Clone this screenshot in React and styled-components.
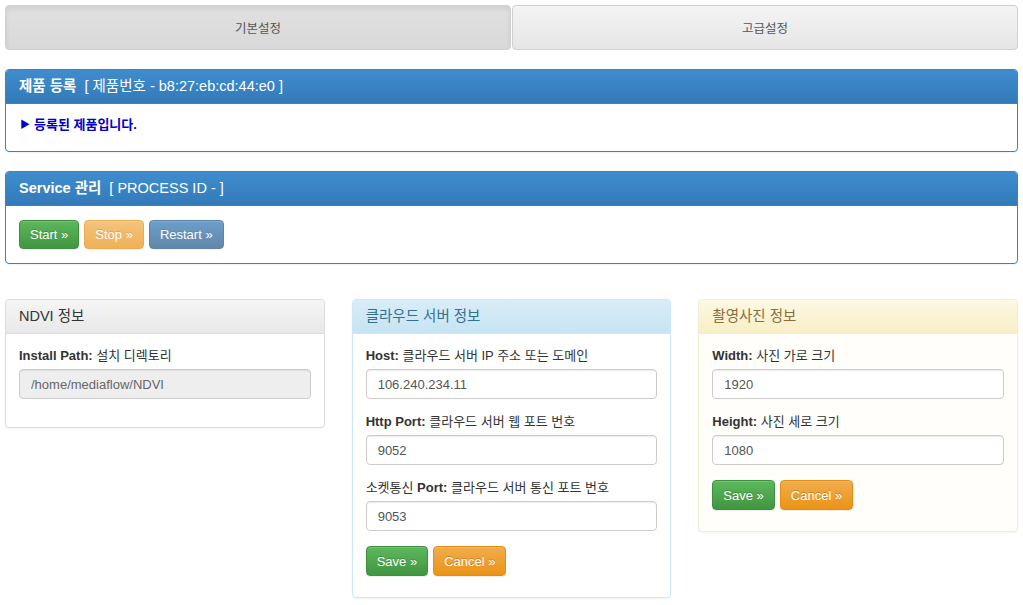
import React from "react";
import styled, { createGlobalStyle, css } from "styled-components";

const GlobalStyle = createGlobalStyle`
    html, body {
        margin: 0;
        padding: 0;
        background: #fff;
    }
    body {
        font-family: "Liberation Sans", Arial, "Noto Sans CJK KR", sans-serif;
        font-size: 13px;
        color: #333;
    }
    * { box-sizing: border-box; }
`;

const Page = styled.div`
    padding: 5px 5px 0 5px;
    display: flex;
    flex-direction: column;
`;

const Tabs = styled.div`
    display: flex;
    gap: 1px;
    margin-bottom: 19px;
`;

const Tab = styled.button`
    flex: 1;
    height: 45px;
    border: 1px solid #cfcfcf;
    border-radius: 4px;
    font-family: inherit;
    font-size: 12.5px;
    color: #555;
    cursor: pointer;
    background: ${p => p.$active
        ? "linear-gradient(to bottom, #e0e0e0 0, #d9d9d9 100%)"
        : "linear-gradient(to bottom, #f4f4f4 0, #e6e6e6 100%)"};
    box-shadow: ${p => p.$active
        ? "inset 0 3px 5px rgba(0,0,0,.08)"
        : "0 1px 0 rgba(255,255,255,.15) inset"};
`;

const tones = {
    primary: { border: "#3a82c0", from: "#3f8dce", to: "#337ab9", color: "#fff" },
    default: { border: "#dddddd", from: "#f5f5f5", to: "#e8e8e8", color: "#333" },
    info: { border: "#cce9f3", from: "#d9edf7", to: "#c6e4f3", color: "#31708f" },
    warning: { border: "#f6ecd2", from: "#fcf8e3", to: "#f8efc6", color: "#8a6d3b" },
};

const Panel = styled.section`
    border: 1px solid ${p => tones[p.$tone].border};
    border-radius: 4px;
    background: ${p => p.$tone === "warning" ? "#fffefb" : "#fff"};
    box-shadow: 0 1px 2px rgba(0,0,0,.05);
    margin-bottom: ${p => p.$mb ?? 19}px;
    overflow: hidden;
`;

const Heading = styled.header`
    padding: 8px 13px;
    line-height: 17px;
    font-size: 14.5px;
    color: ${p => tones[p.$tone].color};
    background: linear-gradient(to bottom, ${p => tones[p.$tone].from} 0, ${p => tones[p.$tone].to} 100%);
    border-bottom: 1px solid ${p => tones[p.$tone].border};
    white-space: pre;
`;

const Strong = styled.span`
    font-weight: bold;
`;

const Body = styled.div`
    padding: ${p => p.$pad ?? "14px 13px 15px"};
`;

const Notice = styled.div`
    color: #0000c8;
    font-weight: bold;
    font-size: 13px;
    line-height: 17px;
    display: flex;
    align-items: center;
    gap: 4px;
`;

const Arrow = styled.span`
    font-size: 10px;
`;

const BtnRow = styled.div`
    display: flex;
    gap: 5px;
    margin-bottom: ${p => p.$mb ?? 0}px;
`;

const buttonTones = {
    success: css`
        background: linear-gradient(to bottom, #5cb85c 0, #419641 100%);
        border-color: #3e8f3e;
    `,
    warning: css`
        background: linear-gradient(to bottom, #f0ad4e 0, #eb9316 100%);
        border-color: #e38d13;
    `,
    primary: css`
        background: linear-gradient(to bottom, #337ab7 0, #265a88 100%);
        border-color: #245580;
    `,
};

const Button = styled.button`
    height: ${p => p.$h ?? 30}px;
    padding: 0 10px;
    border: 1px solid;
    border-radius: 4px;
    font-family: inherit;
    font-size: 13px;
    color: #fff;
    cursor: pointer;
    text-shadow: 0 -1px 0 rgba(0,0,0,.2);
    box-shadow: inset 0 1px 0 rgba(255,255,255,.15), 0 1px 1px rgba(0,0,0,.075);
    ${p => buttonTones[p.$tone]}
    opacity: ${p => p.disabled ? 0.72 : 1};
    &:disabled { cursor: not-allowed; }
`;

const Columns = styled.div`
    display: grid;
    grid-template-columns: repeat(3, 1fr);
    gap: 27px;
    margin-top: 16px;
    align-items: start;
`;

const FormGroup = styled.div`
    margin-bottom: ${p => p.$mb ?? 15}px;
`;

const Label = styled.label`
    display: block;
    font-size: 13px;
    line-height: 16px;
    margin-bottom: 5px;
    color: #333;
`;

const Key = styled.b`
    font-weight: bold;
`;

const Input = styled.input`
    display: block;
    width: 100%;
    height: 30px;
    padding: 5px 11px;
    font-family: inherit;
    font-size: 13px;
    color: #555;
    background: #fff;
    border: 1px solid #ccc;
    border-radius: 4px;
    box-shadow: inset 0 1px 1px rgba(0,0,0,.075);
    &:disabled {
        background: #eee;
        color: #666;
    }
`;

const Field = ({ k, text, value, disabled, mb }) => (
    <FormGroup $mb={mb}>
        <Label><Key>{k}</Key> {text}</Label>
        <Input defaultValue={value} disabled={disabled} />
    </FormGroup>
);

const SaveCancel = () => (
    <BtnRow $mb={6}>
        <Button $tone="success">Save »</Button>
        <Button $tone="warning">Cancel »</Button>
    </BtnRow>
);

export default function App() {
    return (
        <>
            <GlobalStyle />
            <Page>
                <Tabs>
                    <Tab $active>기본설정</Tab>
                    <Tab>고급설정</Tab>
                </Tabs>

                <Panel $tone="primary">
                    <Heading $tone="primary"><Strong>제품 등록</Strong>  [ 제품번호 - b8:27:eb:cd:44:e0 ]</Heading>
                    <Body $pad="12px 14px 18px">
                        <Notice><Arrow>▶</Arrow>등록된 제품입니다.</Notice>
                    </Body>
                </Panel>

                <Panel $tone="primary">
                    <Heading $tone="primary"><Strong>Service 관리</Strong>  [ PROCESS ID - ]</Heading>
                    <Body $pad="14px 13px">
                        <BtnRow>
                            <Button $tone="success" $h={29}>Start »</Button>
                            <Button $tone="warning" $h={29} disabled>Stop »</Button>
                            <Button $tone="primary" $h={29} disabled>Restart »</Button>
                        </BtnRow>
                    </Body>
                </Panel>

                <Columns>
                    <Panel $tone="default">
                        <Heading $tone="default">NDVI 정보</Heading>
                        <Body>
                            <Field k="Install Path:" text="설치 디렉토리" value="/home/mediaflow/NDVI" disabled mb={13} />
                        </Body>
                    </Panel>

                    <Panel $tone="info">
                        <Heading $tone="info">클라우드 서버 정보</Heading>
                        <Body>
                            <Field k="Host:" text="클라우드 서버 IP 주소 또는 도메인" value="106.240.234.11" />
                            <Field k="Http Port:" text="클라우드 서버 웹 포트 번호" value="9052" />
                            <FormGroup>
                                <Label>소켓통신 <Key>Port:</Key> 클라우드 서버 통신 포트 번호</Label>
                                <Input defaultValue="9053" />
                            </FormGroup>
                            <SaveCancel />
                        </Body>
                    </Panel>

                    <Panel $tone="warning">
                        <Heading $tone="warning">촬영사진 정보</Heading>
                        <Body>
                            <Field k="Width:" text="사진 가로 크기" value="1920" />
                            <Field k="Height:" text="사진 세로 크기" value="1080" />
                            <SaveCancel />
                        </Body>
                    </Panel>
                </Columns>
            </Page>
        </>
    );
}
